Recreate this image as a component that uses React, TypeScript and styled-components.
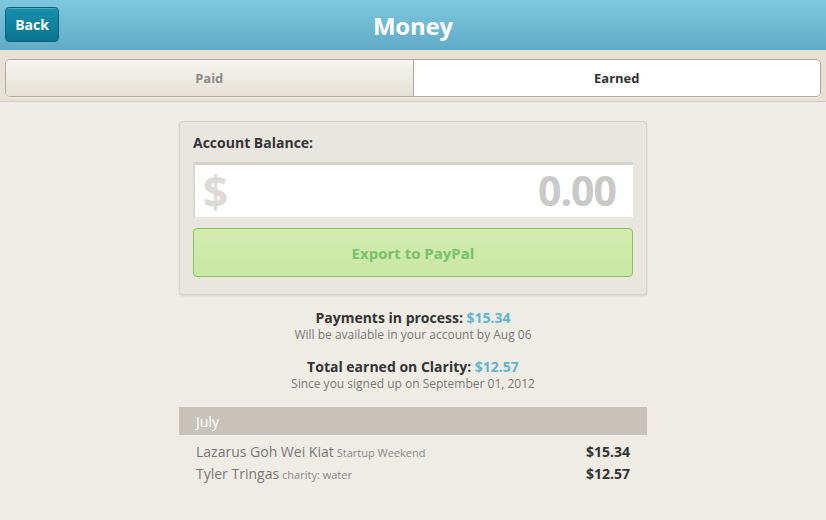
import React from 'react';
import styled, { createGlobalStyle } from 'styled-components';

const GlobalStyle = createGlobalStyle`
  html, body {
    margin: 0;
    padding: 0;
    background: #efece6;
    font-family: "Open Sans", "Liberation Sans", sans-serif;
  }
`;

const Page = styled.div`
  width: 826px;
  min-height: 520px;
  background: #efece6;
`;

const TopBar = styled.div`
  height: 50px;
  display: grid;
  grid-template-columns: 1fr auto 1fr;
  align-items: center;
  padding: 0 5px;
  box-sizing: border-box;
  background: linear-gradient(to bottom, #7dc7df 0%, #62abc7 100%);
`;

const BackButton = styled.button`
  justify-self: start;
  width: 54px;
  height: 35px;
  border: 1px solid #0a6078;
  border-radius: 4px;
  background: linear-gradient(to bottom, #1590ad 0%, #0a7590 100%);
  color: #fff;
  font-family: inherit;
  font-weight: 700;
  font-size: 14px;
  box-shadow: inset 0 1px 0 rgba(255, 255, 255, 0.25);
  margin-top: -1px;
`;

const Title = styled.h1`
  margin: 0;
  color: #fff;
  font-size: 24px;
  font-weight: 700;
  letter-spacing: -0.2px;
`;

const TabStrip = styled.div`
  height: 52px;
  box-sizing: border-box;
  display: flex;
  align-items: flex-start;
  padding: 9px 5px 0 5px;
  background: #e6e0d5;
  border-bottom: 1px solid #cdc9c1;
`;

const TabGroup = styled.div`
  flex: 1;
  display: flex;
  height: 36px;
  border: 1px solid #aeaaa2;
  border-radius: 5px;
  overflow: hidden;
  box-shadow: 0 1px 0 rgba(255, 255, 255, 0.5);
`;

const Tab = styled.div<{ $active?: boolean }>`
  flex: 1;
  display: flex;
  align-items: center;
  justify-content: center;
  font-size: 13px;
  font-weight: 700;
  color: ${(p) => (p.$active ? '#333' : '#8e8b86')};
  background: ${(p) =>
    p.$active ? '#fff' : 'linear-gradient(to bottom, #f6f4f0 0%, #e5e1d7 100%)'};
  & + & {
    border-left: 1px solid #aeaaa2;
  }
`;

const Content = styled.div`
  width: 468px;
  margin: 0 auto;
  padding-top: 19px;
`;

const Card = styled.div`
  background: #e9e6e0;
  border: 1px solid #d6d2ca;
  border-radius: 4px;
  box-shadow: 0 1px 2px rgba(0, 0, 0, 0.12);
  padding: 11px 13px 17px 13px;
`;

const CardLabel = styled.div`
  font-size: 14px;
  font-weight: 700;
  color: #333;
  margin-bottom: 10px;
`;

const BalanceField = styled.div`
  height: 52px;
  background: #fff;
  border-top: 3px solid #d5d2cb;
  border-left: 2px solid #dcd9d2;
  display: flex;
  align-items: center;
  justify-content: space-between;
  padding: 0 17px 0 8px;
`;

const Dollar = styled.span`
  font-size: 44px;
  font-weight: 700;
  color: #dedbd6;
  line-height: 1;
`;

const Amount = styled.span`
  font-size: 41px;
  font-weight: 700;
  color: #c9c9c9;
  letter-spacing: -1px;
  line-height: 1;
  margin-top: -2px;
`;

const ExportButton = styled.button`
  display: block;
  width: 100%;
  height: 49px;
  margin-top: 11px;
  border: 1px solid #8cc061;
  border-radius: 4px;
  background: linear-gradient(to bottom, #d2ecb0 0%, #c9e8a2 100%);
  color: #78c06a;
  font-family: inherit;
  font-size: 15px;
  font-weight: 700;
`;

const Summary = styled.div`
  text-align: center;
  margin-top: 14px;
`;

const SummaryBlock = styled.div`
  margin-bottom: 15px;
`;

const SummaryTitle = styled.div`
  font-size: 14px;
  font-weight: 700;
  color: #333;
  line-height: 18px;
`;

const Highlight = styled.span`
  color: #5fb4d1;
`;

const SummaryNote = styled.div`
  font-size: 12px;
  color: #777;
  line-height: 16px;
`;

const MonthBar = styled.div`
  margin-top: 15px;
  height: 28px;
  background: #c7c3bb;
  color: #fff;
  font-size: 14px;
  display: flex;
  align-items: center;
  padding: 0 17px;
`;

const List = styled.div`
  padding: 5px 17px 0 17px;
`;

const Row = styled.div`
  display: flex;
  justify-content: space-between;
  align-items: baseline;
  height: 22px;
`;

const Name = styled.span`
  font-size: 14px;
  color: #777;
`;

const Org = styled.span`
  font-size: 11px;
  color: #888;
  margin-left: 3px;
`;

const Price = styled.span`
  font-size: 14px;
  font-weight: 700;
  color: #333;
`;

const payments = [
  { name: 'Lazarus Goh Wei Kiat', org: 'Startup Weekend', amount: '$15.34' },
  { name: 'Tyler Tringas', org: 'charity: water', amount: '$12.57' },
];

const App: React.FC = () => {
  return (
    <>
      <GlobalStyle />
      <Page>
        <TopBar>
          <BackButton>Back</BackButton>
          <Title>Money</Title>
          <span />
        </TopBar>
        <TabStrip>
          <TabGroup>
            <Tab>Paid</Tab>
            <Tab $active>Earned</Tab>
          </TabGroup>
        </TabStrip>
        <Content>
          <Card>
            <CardLabel>Account Balance:</CardLabel>
            <BalanceField>
              <Dollar>$</Dollar>
              <Amount>0.00</Amount>
            </BalanceField>
            <ExportButton>Export to PayPal</ExportButton>
          </Card>
          <Summary>
            <SummaryBlock>
              <SummaryTitle>
                Payments in process: <Highlight>$15.34</Highlight>
              </SummaryTitle>
              <SummaryNote>Will be available in your account by Aug 06</SummaryNote>
            </SummaryBlock>
            <SummaryBlock>
              <SummaryTitle>
                Total earned on Clarity: <Highlight>$12.57</Highlight>
              </SummaryTitle>
              <SummaryNote>Since you signed up on September 01, 2012</SummaryNote>
            </SummaryBlock>
          </Summary>
          <MonthBar>July</MonthBar>
          <List>
            {payments.map((p) => (
              <Row key={p.name}>
                <span>
                  <Name>{p.name}</Name>
                  <Org>{p.org}</Org>
                </span>
                <Price>{p.amount}</Price>
              </Row>
            ))}
          </List>
        </Content>
      </Page>
    </>
  );
};

export default App;
